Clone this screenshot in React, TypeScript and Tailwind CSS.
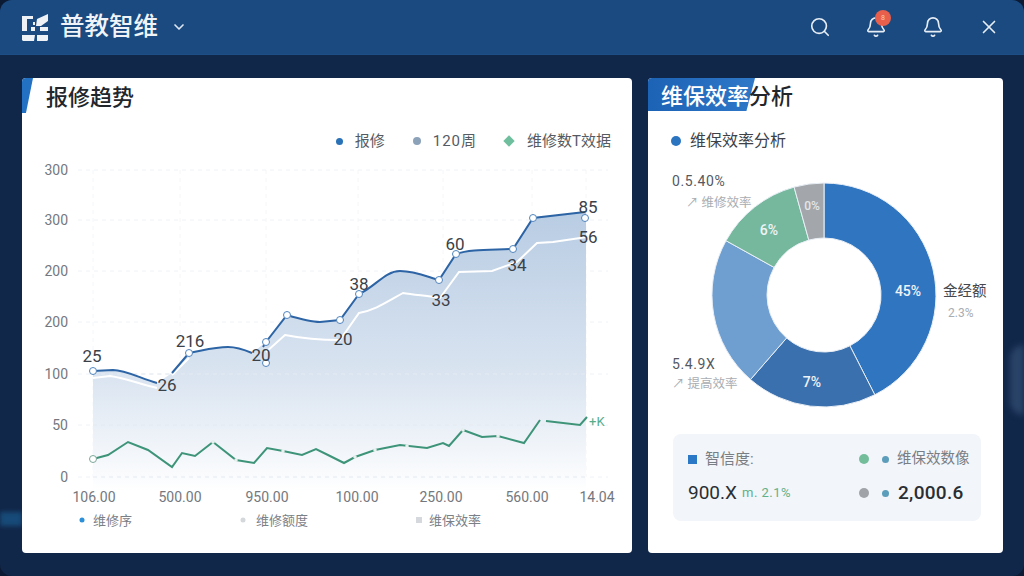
import { Bell, ChevronDown, Search, X } from "lucide-react";

const blueLine = "M93 371 L113 370 C125 370 140 378 157 383 M172 373 L189 353 C205 350 215 347 228 347 C238 347 245 350 252 353 M263 347 L266 342 L287 315 C300 319 310 322 320 322 L340 320 L359 294 C375 287 385 271 400 271 C415 271 428 277 439 280 L456 254 C470 249 490 250 513 249 L533 218 L585 212";
const whiteLine = "M93 378 L110 376 C125 378 140 384 157 388 M172 375 L189 358 M266 352 L285 335 C300 338 320 340 340 340 L359 313 C375 310 385 303 403 293 C415 295 430 296 440 298 L459 272 L492 271 L517 262 L537 243 L553 242 L587 237";
const areaPath = "M93 371 L113 370 C125 370 140 378 157 383 L172 373 L189 353 C205 350 215 347 228 347 C238 347 245 350 252 353 L266 342 L287 315 C300 319 310 322 320 322 L340 320 L359 294 C375 287 385 271 400 271 C415 271 428 277 439 280 L456 254 C470 249 490 250 513 249 L533 218 L586 212 L586 490 L93 490 Z";
const greenLine = "M93 459 L108 455 L128 442 L148 450 L172 467 L182 453 L195 456 L213 442 L236 460 L254 463 L267 448 L283 451 L302 455 L316 449 L330 456 L344 463 L355 457 L375 450 L400 445 L427 448 L443 443 L449 446 L463 430 L482 437 L498 436 L524 443 L540 420 M546 421 L580 425 L587 417";

const gridY = [170, 220, 271, 322, 374, 425, 477];
const gridX = [93, 180, 266, 358, 443, 532, 586];
const yLabels = ["300", "300", "200", "200", "100", "50", "0"];
const xLabels: [number, string][] = [[94, "106.00"], [180, "500.00"], [267, "950.00"], [357, "100.00"], [441, "250.00"], [527, "560.00"], [597, "14.04"]];
const nums: [number, number, string][] = [
  [92, 362, "25"], [167, 391, "26"], [190, 347, "216"], [261, 361, "20"], [343, 345, "20"],
  [359, 290, "38"], [441, 306, "33"], [455, 250, "60"], [517, 271, "34"], [588, 213, "85"], [588, 243, "56"],
];
const dots: [number, number][] = [[93, 371], [189, 353], [266, 342], [287, 315], [340, 320], [359, 294], [439, 280], [456, 254], [513, 249], [533, 218], [585, 218], [266, 363]];
const greenDots: [number, number][] = [[213, 442], [236, 460], [283, 451], [355, 457], [375, 450], [407, 446], [463, 430], [498, 436]];

// donut slices, angles from 12 o'clock, clockwise
const slices: [number, number, string][] = [
  [0, 153, "#2f75c0"],
  [153, 221, "#3a70ad"],
  [221, 299, "#6f9ed1"],
  [299, 344.5, "#76b89d"],
  [344.5, 360, "#a3a7ab"],
];

function slicePath(a0: number, a1: number) {
  const cx = 824, cy = 295, r = 112, ir = 57;
  const pt = (a: number, rad: number) => {
    const t = ((a - 90) * Math.PI) / 180;
    return `${(cx + rad * Math.cos(t)).toFixed(1)} ${(cy + rad * Math.sin(t)).toFixed(1)}`;
  };
  const big = a1 - a0 > 180 ? 1 : 0;
  return `M${pt(a0, r)} A${r} ${r} 0 ${big} 1 ${pt(a1, r)} L${pt(a1, ir)} A${ir} ${ir} 0 ${big} 0 ${pt(a0, ir)} Z`;
}

function Logo() {
  return (
    <svg width="26" height="27" viewBox="0 0 26 27" fill="#eef2f7">
      <path d="M0 2 H11 V5 H5 V17 H0 Z" />
      <path d="M11 8 H13 V11 H11 Z" />
      <path d="M9 13 H13 V17 H9 Z" />
      <path d="M15 5 L26 0 V7 L19 12 H14 Z" />
      <path d="M18 13 H26 V17 H18 Z" />
      <path d="M0 21 H13 L12 27 H1 L0 26 Z" />
      <path d="M15 21 H26 V26 L25 27 H15 Z" />
    </svg>
  );
}

export default function App() {
  return (
    <div className="w-[1024px] h-[576px] overflow-hidden bg-[#0c1b33] font-['Roboto','Noto_Sans_CJK_SC',sans-serif]">
      <div className="relative w-full h-full rounded-[12px] overflow-hidden bg-[#11274a]">
        {/* 뒤 배경 흐림 */}
        <div className="absolute right-0 top-[345px] w-[14px] h-[70px] rounded-l-full bg-[#2a4468] blur-[3px]" />
        <div className="absolute left-0 top-[512px] w-[22px] h-[14px] bg-[#174a78] blur-[2px]" />

        <header className="relative h-[55px] flex items-center bg-[#1a4a80] border-b border-[#1d4f86]">
          <div className="ml-[22px]"><Logo /></div>
          <h1 className="ml-[12px] text-[24.5px] leading-none font-medium text-[#f0f4f9]">普教智维</h1>
          <ChevronDown size={16} strokeWidth={2.5} className="ml-[13px] text-[#dfe7f1]" />
          <div className="ml-auto flex items-center">
            <Search size={22} strokeWidth={1.8} className="text-[#e6edf5]" />
            <div className="relative ml-[34px]">
              <Bell size={22} strokeWidth={1.8} className="text-[#e6edf5]" />
              <span className="absolute -top-[6px] left-[10px] w-[16px] h-[16px] rounded-full bg-[#e8604c] flex items-center justify-center text-[7px] text-[#f8c8b8]">8</span>
            </div>
            <Bell size={22} strokeWidth={1.8} className="ml-[35px] text-[#e6edf5]" />
            <X size={22} strokeWidth={1.8} className="ml-[34px] mr-[24px] text-[#e6edf5]" />
          </div>
        </header>

        <main className="relative flex gap-[16px] pt-[23px] pl-[22px]">
          {/* 报修趋势 */}
          <section className="relative w-[610px] h-[475px] bg-white rounded-[4px] overflow-hidden">
            <div className="absolute left-0 top-0 w-[11px] h-[35px] bg-[#2271c3] [clip-path:polygon(0_0,100%_0,36%_100%,0_100%)]" />
            <h2 className="pl-[24px] h-[40px] flex items-center text-[22px] leading-none font-medium text-[#22262b]">报修趋势</h2>
            <div className="mt-[10px] h-[26px] flex items-center justify-end pr-[21px] text-[15px] text-[#555b63]">
              <span className="w-[7px] h-[7px] rounded-full bg-[#2a72b8]" />
              <span className="ml-[12px]">报修</span>
              <span className="ml-[28px] w-[8px] h-[8px] rounded-full bg-[#8ba2b8]" />
              <span className="ml-[12px] tracking-[1px]">120周</span>
              <span className="ml-[28px] w-[8px] h-[8px] rotate-45 bg-[#6fbf9f]" />
              <span className="ml-[14px]">维修数T效据</span>
            </div>
            <svg width="610" height="400" viewBox="22 153 610 400" className="block mt-[-1px]">
              <defs>
                <linearGradient id="area" gradientUnits="userSpaceOnUse" x1="0" y1="212" x2="0" y2="492">
                  <stop offset="0" stopColor="#b8cce3" />
                  <stop offset="0.6" stopColor="#dbe5f1" />
                  <stop offset="1" stopColor="#ffffff" />
                </linearGradient>
              </defs>
              {gridY.map((y) => (
                <line key={y} x1="78" x2="608" y1={y} y2={y} stroke="#f0f2f4" strokeDasharray="4 4" />
              ))}
              {gridX.map((x) => (
                <line key={x} x1={x} x2={x} y1="170" y2="477" stroke="#f5f6f8" strokeDasharray="4 4" />
              ))}
              <path d={areaPath} fill="url(#area)" />
              {gridY.slice(4).map((y) => (
                <line key={y} x1="93" x2="586" y1={y} y2={y} stroke="#e4eaf1" strokeDasharray="4 4" />
              ))}
              <path d={whiteLine} fill="none" stroke="#ffffff" strokeWidth="2" />
              <path d={blueLine} fill="none" stroke="#2c64a5" strokeWidth="2" />
              <path d={greenLine} fill="none" stroke="#3d9478" strokeWidth="2" />
              {gridY.map((y, i) => (
                <text key={y} x="68" y={y + 5} textAnchor="end" fontSize="14" fill="#74787e">{yLabels[i]}</text>
              ))}
              {xLabels.map(([x, t]) => (
                <text key={t} x={x} y="502" textAnchor="middle" fontSize="14" fill="#74787e">{t}</text>
              ))}
              {dots.map(([x, y]) => (
                <circle key={`${x}-${y}`} cx={x} cy={y} r="3.5" fill="#ffffff" stroke="#4f84bd" strokeWidth="1" />
              ))}
              {greenDots.map(([x, y]) => (
                <circle key={`${x}-${y}`} cx={x} cy={y} r="1.8" fill="#e8f0ee" />
              ))}
              <circle cx="93" cy="459" r="3.5" fill="#ffffff" stroke="#7aa898" />
              {nums.map(([x, y, t]) => (
                <text key={`${x}${t}`} x={x} y={y} textAnchor="middle" fontSize="17" fill="#3b4148">{t}</text>
              ))}
              <text x="589" y="426" fontSize="13" fill="#55ad8c">+K</text>
              <circle cx="82" cy="520" r="2.5" fill="#2d8fd8" />
              <text x="93" y="525" fontSize="13" fill="#7b8087">维修序</text>
              <circle cx="243" cy="520" r="2.5" fill="#d5d8da" />
              <text x="256" y="525" fontSize="13" fill="#7b8087">维修额度</text>
              <rect x="416" y="517" width="6" height="6" fill="#d5d8dd" />
              <text x="429" y="525" fontSize="13" fill="#7b8087">维保效率</text>
            </svg>
          </section>

          {/* 维保效率分析 */}
          <section className="relative w-[355px] h-[475px] bg-white rounded-[4px] overflow-hidden">
            <div className="absolute left-0 top-0 w-[107px] h-[33px] bg-gradient-to-r from-[#1c62b5] to-[#2f78c8] [clip-path:polygon(0_0,100%_0,92%_100%,0_100%)]" />
            <h2 className="relative pl-[13px] h-[38px] flex items-center text-[22px] leading-none font-medium text-[#22262b]">
              <span className="text-white">维保效率</span>分析
            </h2>
            <div className="mt-[12px] h-[26px] pl-[23px] flex items-center text-[16px] text-[#3c4248]">
              <span className="w-[10px] h-[10px] rounded-full bg-[#2a74c0]" />
              <span className="ml-[9px]">维保效率分析</span>
            </div>
            <svg width="355" height="279" viewBox="648 154 355 279" className="block">
              {slices.map(([a0, a1, c]) => (
                <path key={a0} d={slicePath(a0, a1)} fill={c} stroke="#e9eff6" strokeWidth="1" />
              ))}
              <g fontSize="14" fontWeight="500" fill="#eef3f8" textAnchor="middle">
                <text x="908" y="296">45%</text>
                <text x="812" y="387">7%</text>
                <text x="769" y="235">6%</text>
                <text x="812" y="210" fontSize="12" fill="#e3e5e7">0%</text>
              </g>
              <text x="672" y="186" fontSize="14" letterSpacing="0.6" fill="#55595f">0.5.40%</text>
              <text x="686" y="207" fontSize="12.5" fill="#a9adb2">↗ 维修效率</text>
              <text x="943" y="296" fontSize="14.5" fill="#45494f">金经额</text>
              <text x="948" y="317" fontSize="12" fill="#a9adb2">2.3%</text>
              <text x="672" y="369" fontSize="14" letterSpacing="0.6" fill="#55595f">5.4.9X</text>
              <text x="672" y="388" fontSize="12.5" fill="#a9adb2">↗ 提高效率</text>
            </svg>
            <div className="mt-[1px] ml-[25px] w-[308px] h-[87px] rounded-[8px] bg-[#f2f5f9] pl-[15px] pt-[14px]">
              <div className="flex items-center h-[22px]">
                <span className="w-[9px] h-[9px] bg-[#2b78c6]" />
                <span className="ml-[8px] w-[154px] text-[15px] text-[#797e85]">智信度:</span>
                <span className="w-[10px] h-[10px] rounded-full bg-[#74bd9b]" />
                <span className="ml-[13px] w-[7px] h-[7px] rounded-full bg-[#5b9dbb]" />
                <span className="ml-[8px] text-[14.5px] text-[#797e85]">维保效数像</span>
              </div>
              <div className="flex items-center h-[34px] mt-[6px]">
                <span className="w-[54px] text-[19px] text-[#2a2e33]">900.X</span>
                <span className="w-[117px] text-[13px] text-[#62b088] tracking-[0.5px]">m. 2.1%</span>
                <span className="w-[10px] h-[10px] rounded-full bg-[#a0a4a8]" />
                <span className="ml-[13px] w-[7px] h-[7px] rounded-full bg-[#5b9dbb]" />
                <span className="ml-[9px] text-[19px] font-medium tracking-[0.3px] text-[#2a2e33]">2,000.6</span>
              </div>
            </div>
          </section>
        </main>
      </div>
    </div>
  );
}
